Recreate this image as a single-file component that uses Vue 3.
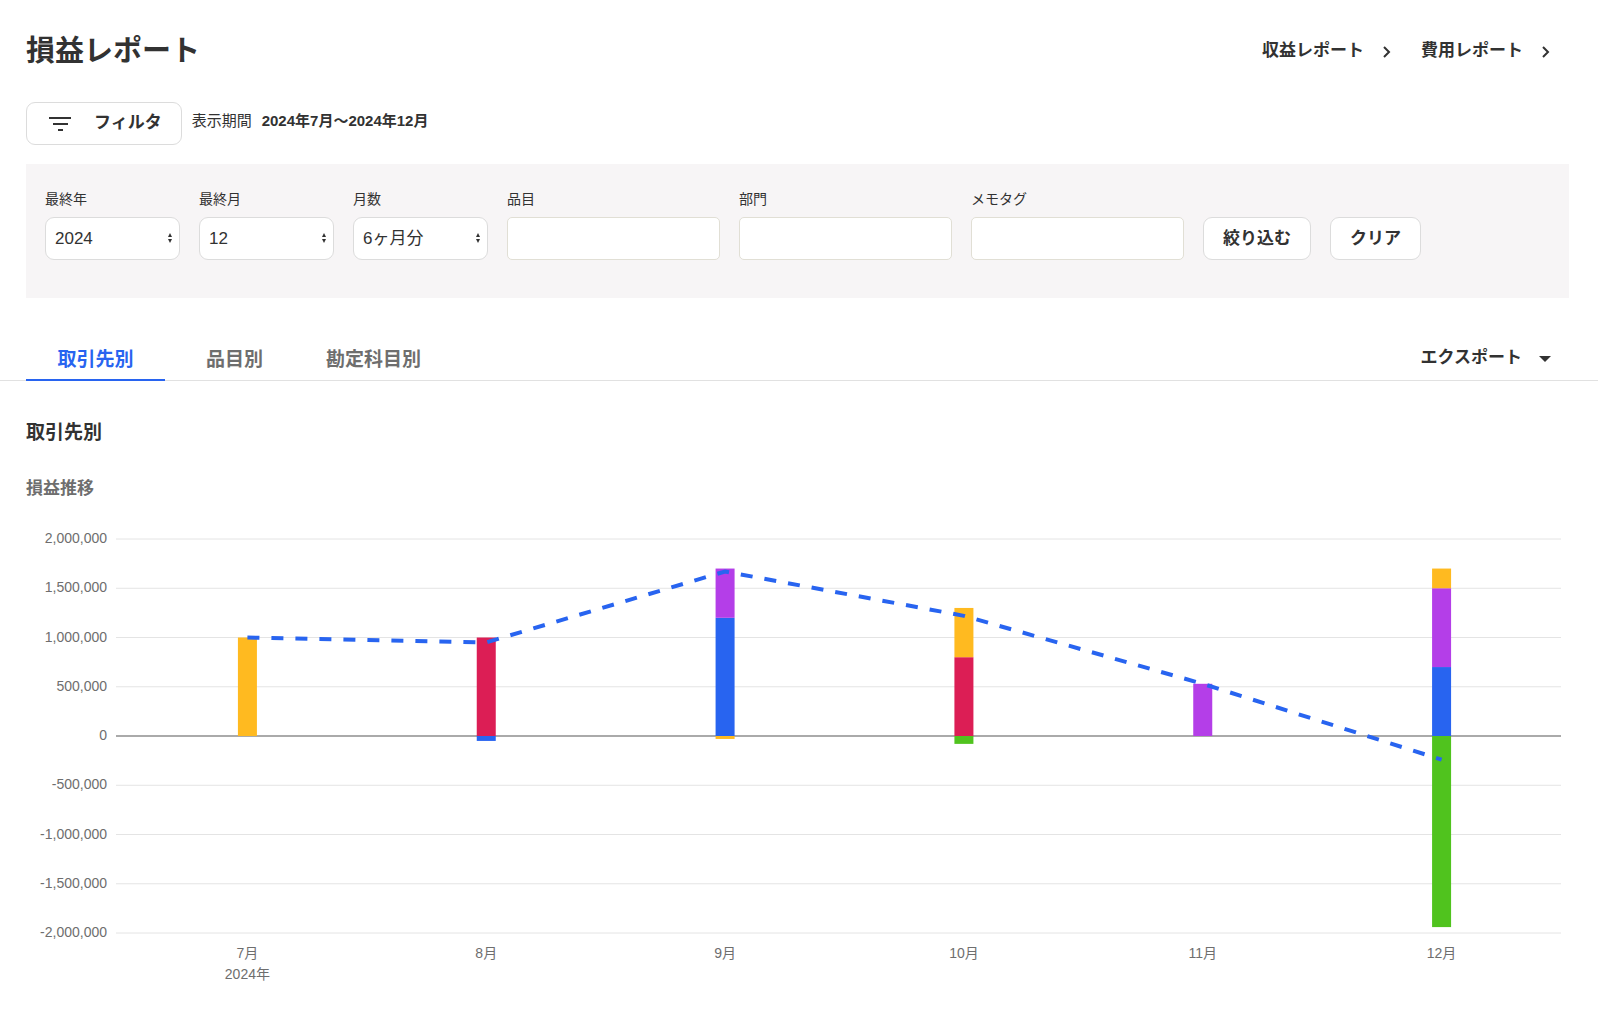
<script setup>
import { computed, onBeforeUnmount, onMounted, ref } from 'vue'

const reports = ['収益レポート', '費用レポート']
const tabs = ['取引先別', '品目別', '勘定科目別']
const activeTab = ref(0)

const selects = ref([
  { id: 'end-year', label: '最終年', options: ['2024', '2023', '2022'], value: '2024' },
  { id: 'end-month', label: '最終月', options: ['12', '11', '10', '9', '8', '7'], value: '12' },
  { id: 'month-count', label: '月数', options: ['6ヶ月分', '12ヶ月分'], value: '6ヶ月分' },
])
const inputs = [
  { id: 'item', label: '品目' },
  { id: 'section', label: '部門' },
  { id: 'memo-tag', label: 'メモタグ' },
]

const YELLOW = '#ffba20'
const RED = '#dc1e55'
const BLUE = '#2864f0'
const PURPLE = '#b43ee8'
const GREEN = '#50c31e'

const months = [
  { label: '7月', sub: '2024年', net: 1000000, up: [[1000000, YELLOW]], down: [] },
  { label: '8月', net: 950000, up: [[1000000, RED]], down: [[50000, BLUE]] },
  { label: '9月', net: 1670000, up: [[1200000, BLUE], [500000, PURPLE]], down: [[30000, YELLOW]] },
  { label: '10月', net: 1220000, up: [[800000, RED], [500000, YELLOW]], down: [[80000, GREEN]] },
  { label: '11月', net: 530000, up: [[530000, PURPLE]], down: [] },
  { label: '12月', net: -240000, up: [[700000, BLUE], [800000, PURPLE], [200000, YELLOW]], down: [[1940000, GREEN]] },
]

const MAX = 2000000
const STEP = 500000
const TOP = 19
const HEIGHT = 394
const AXIS_LEFT = 90
const PLOT_LEFT = 102
const BAR = 19

const chartBox = ref(null)
const width = ref(1543)
let observer
onMounted(() => {
  width.value = chartBox.value.clientWidth
  observer = new ResizeObserver(() => {
    width.value = chartBox.value.clientWidth
  })
  observer.observe(chartBox.value)
})
onBeforeUnmount(() => observer.disconnect())

const plotRight = computed(() => width.value - 8)
const yOf = (v) => TOP + ((MAX - v) / (2 * MAX)) * HEIGHT
const xOf = (i) => PLOT_LEFT + ((plotRight.value - PLOT_LEFT) / months.length) * (i + 0.5)

const ticks = []
for (let v = MAX; v >= -MAX; v -= STEP) ticks.push(v)

const bars = computed(() =>
  months.flatMap((m, i) => {
    const x = xOf(i) - BAR / 2
    const out = []
    let base = 0
    for (const [v, color] of m.up) {
      out.push({ x, y: yOf(base + v), h: yOf(base) - yOf(base + v), color })
      base += v
    }
    base = 0
    for (const [v, color] of m.down) {
      out.push({ x, y: yOf(base), h: yOf(base - v) - yOf(base), color })
      base -= v
    }
    return out
  })
)
const netLine = computed(() => months.map((m, i) => `${xOf(i)},${yOf(m.net)}`).join(' '))
</script>

<template>
  <main class="page">
    <header class="header">
      <h1 class="title">損益レポート</h1>
      <nav class="links">
        <a v-for="name in reports" :key="name" href="#" class="link">
          {{ name }}
          <svg class="link-icon" viewBox="0 0 10 12" aria-hidden="true"><path d="M2 1l5 5-5 5" /></svg>
        </a>
      </nav>
    </header>

    <div class="toolbar">
      <button type="button" class="button filter-button">
        <svg class="filter-icon" viewBox="0 0 22 16" aria-hidden="true"><path d="M0 2h22M4 8h15M9 14h5" /></svg>
        フィルタ
      </button>
      <span class="period">表示期間</span>
      <strong class="period">2024年7月～2024年12月</strong>
    </div>

    <form class="filters" @submit.prevent>
      <div v-for="s in selects" :key="s.id" class="field field-select">
        <label :for="s.id" class="label">{{ s.label }}</label>
        <div class="select-wrap">
          <select :id="s.id" v-model="s.value" class="control select">
            <option v-for="o in s.options" :key="o">{{ o }}</option>
          </select>
          <svg class="select-icon" viewBox="0 0 6 10" aria-hidden="true"><path d="M3 0L5 4H1zM3 10L1 6h4z" /></svg>
        </div>
      </div>
      <div v-for="f in inputs" :key="f.id" class="field field-text">
        <label :for="f.id" class="label">{{ f.label }}</label>
        <input :id="f.id" type="text" class="control input" />
      </div>
      <button type="submit" class="button">絞り込む</button>
      <button type="reset" class="button">クリア</button>
    </form>

    <div class="tabbar">
      <div class="tabs" role="tablist">
        <button
          v-for="(t, i) in tabs"
          :key="t"
          type="button"
          role="tab"
          :aria-selected="i === activeTab"
          :class="['tab', { active: i === activeTab }]"
          @click="activeTab = i"
        >{{ t }}</button>
      </div>
      <button type="button" class="export">
        エクスポート
        <svg class="export-icon" viewBox="0 0 12 6" aria-hidden="true"><path d="M0 0h12L6 6z" /></svg>
      </button>
    </div>

    <section class="report">
      <h2 class="section-title">取引先別</h2>
      <h3 class="chart-title">損益推移</h3>
      <div ref="chartBox" class="chart">
        <svg class="chart-svg" :viewBox="`0 0 ${width} 470`" role="img" aria-label="損益推移">
          <g v-for="t in ticks" :key="t">
            <line :x1="AXIS_LEFT" :x2="plotRight" :y1="yOf(t)" :y2="yOf(t)" :class="['grid', { zero: t === 0 }]" />
            <text x="81" :y="yOf(t) + 4" class="tick tick-y">{{ t.toLocaleString('en-US') }}</text>
          </g>
          <rect v-for="(b, i) in bars" :key="i" :x="b.x" :y="b.y" :width="BAR" :height="b.h" :fill="b.color" />
          <polyline :points="netLine" class="net" />
          <g v-for="(m, i) in months" :key="m.label">
            <text :x="xOf(i)" y="438" class="tick tick-x">{{ m.label }}</text>
            <text v-if="m.sub" :x="xOf(i)" y="459" class="tick tick-x">{{ m.sub }}</text>
          </g>
        </svg>
      </div>
    </section>
  </main>
</template>

<style>
body {
  background: #fff;
}
</style>

<style scoped>
.page {
  box-sizing: border-box;
  padding-top: 27px;
  color: #323232;
  font-family: "Liberation Sans", "Noto Sans CJK JP", sans-serif;
  font-size: 17px;
  line-height: 24px;
}
.header {
  display: flex;
  justify-content: space-between;
  align-items: center;
  height: 48px;
  padding: 0 47px 0 26px;
}
.title {
  margin: 0;
  font-size: 29px;
  line-height: 48px;
}
.links {
  display: flex;
  gap: 29px;
}
.link {
  display: flex;
  align-items: center;
  gap: 18px;
  color: inherit;
  font-weight: 700;
  text-decoration: none;
}
.link-icon {
  width: 10px;
  height: 12px;
  margin-top: 2px;
  fill: none;
  stroke: currentColor;
  stroke-width: 2;
}
.toolbar {
  display: flex;
  align-items: center;
  gap: 10px;
  margin-top: 27px;
  padding: 0 29px 0 26px;
}
.button {
  box-sizing: border-box;
  height: 43px;
  padding: 0 19px;
  border: 1px solid #dcdcdc;
  border-radius: 9px;
  background: #fff;
  color: inherit;
  font: inherit;
  font-weight: 700;
  white-space: nowrap;
}
.filter-button {
  display: flex;
  align-items: center;
  gap: 23px;
  padding: 0 19px 2px 22px;
}
.filter-icon {
  width: 22px;
  height: 16px;
  margin-top: 3px;
  stroke: currentColor;
  stroke-width: 2;
}
.period {
  padding-bottom: 5px;
  font-size: 15px;
}
.filters {
  display: flex;
  align-items: flex-end;
  gap: 19px;
  margin: 19px 29px 0 26px;
  padding: 25px 19px 38px;
  background: #f7f5f6;
}
.field {
  display: flex;
  flex-direction: column;
  gap: 8px;
}
.field-select {
  width: 135px;
}
.field-text {
  width: 213px;
}
.label {
  font-size: 14px;
  line-height: 20px;
}
.control {
  box-sizing: border-box;
  width: 100%;
  height: 43px;
  padding: 0 9px;
  border: 1px solid #dcdcdc;
  background: #fff;
  color: inherit;
  font: inherit;
}
.select-wrap {
  position: relative;
  display: flex;
}
.select {
  appearance: none;
  border-radius: 9px;
}
.select-icon {
  position: absolute;
  top: 16px;
  right: 7px;
  width: 6px;
  height: 10px;
  fill: currentColor;
  pointer-events: none;
}
.input {
  border-color: #e1dfd5;
  border-radius: 5px;
}
.tabbar {
  display: flex;
  justify-content: space-between;
  align-items: flex-end;
  height: 44px;
  margin-top: 38px;
  padding: 0 47px 0 26px;
  border-bottom: 1px solid #e1e1e1;
}
.tabs {
  display: flex;
  margin-bottom: -1px;
}
.tab {
  width: 139px;
  height: 44px;
  padding: 3px 0 0;
  border: 0;
  border-bottom: 2px solid transparent;
  background: none;
  color: #6e6e6e;
  font: inherit;
  font-size: 19px;
  font-weight: 700;
}
.tab.active {
  border-color: #2864f0;
  color: #2864f0;
}
.export {
  display: flex;
  align-items: center;
  gap: 17px;
  margin-bottom: 10px;
  padding: 0;
  border: 0;
  background: none;
  color: inherit;
  font: inherit;
  font-weight: 700;
}
.export-icon {
  width: 12px;
  height: 6px;
  margin-top: 2px;
  fill: currentColor;
}
.report {
  padding: 40px 29px 0 26px;
}
.section-title {
  margin: 0;
  font-size: 19px;
}
.chart-title {
  margin: 32px 0 19px;
  color: #6e6e6e;
  font-size: 17px;
}
.chart-svg {
  display: block;
  width: 100%;
  height: 470px;
}
.grid {
  stroke: #e4e4e4;
  stroke-width: 1;
}
.grid.zero {
  stroke: #aaa;
  stroke-width: 2;
}
.tick {
  fill: #6e6e6e;
  font-size: 14px;
}
.tick-y {
  text-anchor: end;
}
.tick-x {
  text-anchor: middle;
}
.net {
  fill: none;
  stroke: #2864f0;
  stroke-width: 4;
  stroke-dasharray: 12 12;
}
</style>
